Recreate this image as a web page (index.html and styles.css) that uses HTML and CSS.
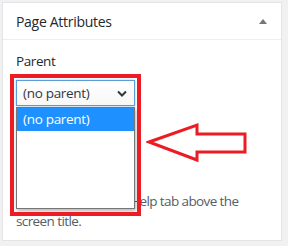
FILE: index.html
```html
<!DOCTYPE html>
<html>
<head>
<meta charset="utf-8">
<link rel="stylesheet" href="styles.css">
</head>
<body>
<div class="panel">
  <div class="panel-head">
    <h2 class="panel-title">Page Attributes</h2>
    <span class="toggle"></span>
  </div>
  <div class="panel-body">
    <p class="label">Parent</p>
    <div class="select">
      <span class="select-text">(no parent)</span>
      <svg class="chev" width="10" height="7" viewBox="0 0 10 7"><path d="M1 1.5 L5 5.5 L9 1.5" fill="none" stroke="#32373c" stroke-width="2"/></svg>
    </div>
    <p class="help">Need help? Use the Help tab above the screen title.</p>
  </div>
  <div class="dropdown">
    <div class="option selected">(no parent)</div>
  </div>
  <div class="highlight"></div>
  <svg class="arrow" width="104" height="44" viewBox="0 0 104 44"><polygon points="3,22 51,5 51,14 99,14 99,32 51,32 51,40" fill="none" stroke="#ed1c24" stroke-width="3" stroke-linejoin="miter"/></svg>
</div>
</body>
</html>
```
FILE: styles.css
```css
html, body {
  margin: 0;
  padding: 0;
  background: #f1f1f1;
}
body {
  padding: 2px 0 0 2px;
  font-family: "Open Sans", "Noto Sans", sans-serif;
  color: #23282d;
}
.panel {
  position: relative;
  width: 278px;
  height: 237px;
  background: #fff;
  border: 1px solid #e2e4e7;
}
.panel-head {
  height: 36px;
  border-bottom: 1px solid #eee;
  display: flex;
  align-items: center;
  justify-content: space-between;
  padding: 0 14px 0 13px;
}
.panel-title {
  margin: 0;
  font-size: 14px;
  font-weight: 500;
  letter-spacing: -0.3px;
  color: #23282d;
}
.toggle {
  width: 0;
  height: 0;
  border-left: 4px solid transparent;
  border-right: 4px solid transparent;
  border-bottom: 5px solid #72777c;
}
.panel-body {
  padding: 12px 12px 0 13px;
}
.label {
  margin: 0;
  font-size: 13.5px;
  letter-spacing: -0.4px;
  line-height: 19px;
}
.select {
  margin-top: 9px;
  height: 24px;
  width: 104px;
  border: 1px solid #5b9dd9;
  box-shadow: 0 0 2px rgba(30,140,190,.5);
  display: flex;
  align-items: center;
  justify-content: space-between;
  padding: 0 7px 0 6px;
  background: linear-gradient(#fff, #f7f7f7);
}
.select-text {
  font-size: 13.5px;
  letter-spacing: -0.3px;
  color: #32373c;
}
.help {
  margin: 85px 0 0;
  font-size: 13.5px;
  letter-spacing: -0.6px;
  line-height: 20px;
  color: #555d66;
}
.dropdown {
  position: absolute;
  left: 13px;
  top: 104px;
  width: 117px;
  height: 100px;
  background: #fff;
  border: 1px solid #767676;
  box-shadow: 1px 2px 4px rgba(0,0,0,.3);
}
.option {
  height: 23px;
  line-height: 23px;
  padding-left: 6px;
  font-size: 13.5px;
  letter-spacing: -0.3px;
}
.option.selected {
  background: #1e90ff;
  color: #fff;
}
.highlight {
  position: absolute;
  left: 7px;
  top: 71px;
  width: 131px;
  height: 142px;
  box-sizing: border-box;
  border: 4px solid #ed1c24;
}
.arrow {
  position: absolute;
  left: 143px;
  top: 117px;
}
```
